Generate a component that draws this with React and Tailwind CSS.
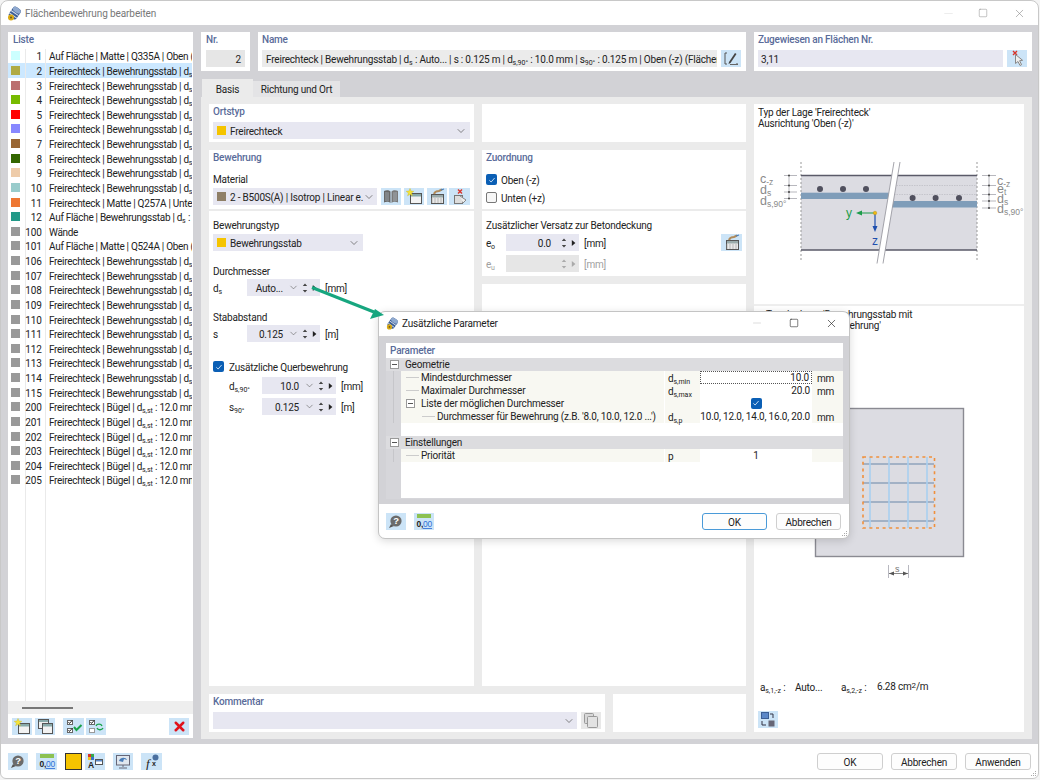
import React from "react";
import { ChevronDown, Square, X, Minus } from "lucide-react";

const Sub = ({ children }) => <span className="text-[7px] leading-none relative top-[2px] tracking-normal">{children}</span>;

const Logo = ({ c = "w-[15px] h-[15px]" }) => (
  <svg viewBox="0 0 15 15" className={c}>
    <g transform="rotate(35 7.5 7.5)">
      <rect x="3" y="1" width="9" height="12" rx="3" fill="#3d5f95" />
      <ellipse cx="7.5" cy="3.5" rx="4.5" ry="2.5" fill="#8fa9cf" />
      <path d="M3 7h9M3 10h9" stroke="#d7e0ee" strokeWidth="1" />
    </g>
    <circle cx="4" cy="11.5" r="3" fill="#d9a915" />
    <circle cx="4" cy="11.5" r="1" fill="#6b5a1c" />
  </svg>
);

const Btn = ({ children, c = "w-[20px]", gray }) => (
  <div className={`${c} h-[17px] shrink-0 flex items-center justify-center ${gray ? "bg-[#e8e8e8]" : "bg-[#cce4f7]"}`}>{children}</div>
);

const Ic = ({ children }) => <svg viewBox="0 0 20 17" className="w-[20px] h-[17px]">{children}</svg>;

const HelpI = () => (
  <Ic>
    <path d="M5 11l-2 4 5-2z" fill="#555" />
    <circle cx="10" cy="8" r="5.6" fill="#6b6b6b" />
    <text x="10" y="11.3" fontSize="9.5" fontWeight="700" textAnchor="middle" fill="#fff" fontFamily="Liberation Sans">?</text>
  </Ic>
);
const UnitsI = () => (
  <Ic>
    <rect x="3" y="1" width="14" height="4" fill="#8cc152" />
    <text x="2.5" y="14" fontSize="8.5" fontWeight="700" fill="#222" fontFamily="Liberation Sans">0,</text>
    <text x="9" y="14" fontSize="8.5" fill="#2f6fd6" fontFamily="Liberation Sans" textDecoration="underline">00</text>
  </Ic>
);
const NewI = () => (
  <Ic>
    <rect x="6.5" y="5.5" width="11" height="10" fill="#f2f2f2" stroke="#555" />
    <rect x="7" y="6" width="10" height="2.5" fill="#8aa" />
    <path d="M6 0.5l1 2.6 2.8.2-2.2 1.8.8 2.7L6 6.3 3.6 7.8l.8-2.7-2.2-1.8 2.8-.2z" fill="#f5e33a" stroke="#c9b81c" strokeWidth=".4" />
  </Ic>
);
const CopyI = () => (
  <Ic>
    <rect x="3.5" y="1.5" width="10" height="9" fill="#eee" stroke="#555" />
    <rect x="7.5" y="5.5" width="10" height="10" fill="#f2f2f2" stroke="#555" />
    <rect x="8" y="6" width="9" height="2.5" fill="#8aa" />
    <rect x="4" y="2" width="9" height="2" fill="#8aa" />
  </Ic>
);
const ChkI = () => (
  <Ic>
    <rect x="3.5" y="2.5" width="5" height="4" fill="#fff" stroke="#666" />
    <rect x="3.5" y="10.5" width="5" height="4" fill="#fff" stroke="#666" />
    <path d="M4.5 4l1 1.5 3-3.5M4.5 12l1 1.5 3-3.5" stroke="#333" fill="none" />
    <path d="M10 9l2.5 3 5-5" stroke="#19a34a" strokeWidth="2" fill="none" />
  </Ic>
);
const SwapI = () => (
  <Ic>
    <rect x="3.5" y="2.5" width="5" height="4" fill="#fff" stroke="#666" />
    <rect x="3.5" y="10.5" width="5" height="4" fill="#fff" stroke="#999" />
    <path d="M4.5 4l1 1.5 3-3.5" stroke="#333" fill="none" />
    <path d="M10 8c1-2.5 5-2.5 6 0M17 10c-1 2-5 2.5-6 0" stroke="#19a34a" strokeWidth="1.4" fill="none" />
  </Ic>
);
const BookI = () => (
  <Ic>
    <path d="M3 3c2-1 5-1 6.5.5V15C8 13.5 5 13.5 3 14.5z" fill="#666" />
    <path d="M17 3c-2-1-5-1-6.5.5V15c1.5-1.5 4.5-1.5 6.5-.5z" fill="#7a7a7a" />
    <path d="M5 4v9M7 4.2v8.8M13 4.2V13M15 4v9" stroke="#c5d0dc" strokeWidth=".6" />
  </Ic>
);
const BoxEditI = () => (
  <Ic>
    <rect x="4.5" y="6.5" width="12" height="9" fill="#e8e8e8" stroke="#555" />
    <rect x="5" y="7" width="11" height="2.5" fill="#9aa" />
    <path d="M5 10v5M8 10v5M11 10v5M14 10v5" stroke="#999" strokeWidth=".6" />
    <path d="M7 6c1-3 3-3 5-3l3-1.5" stroke="#b08a5a" strokeWidth="2" fill="none" />
    <path d="M14 2l3-1" stroke="#4a7db8" strokeWidth="1.2" />
  </Ic>
);
const DelI = () => (
  <Ic>
    <rect x="4.5" y="7.5" width="8" height="8" fill="#ddd" stroke="#777" />
    <path d="M8 1.5l4 4M12 1.5l-4 4" stroke="#d9342b" strokeWidth="1.4" />
    <path d="M10 8l6 4-3 3" stroke="#888" fill="#eee" />
  </Ic>
);
const EditI = () => (
  <Ic>
    <path d="M6 3H4v11h2M15 14h2" stroke="#555" fill="none" />
    <path d="M8 12l6-9 1.5 1-6 9-2 1z" fill="#444" />
    <path d="M9 14.5h8" stroke="#666" />
  </Ic>
);
const PickI = () => (
  <Ic>
    <path d="M6 1l4 4M10 1L6 5" stroke="#d9342b" strokeWidth="1.4" />
    <path d="M8.5 4.5l0 9 2.5-2 2 4 1.6-.8-2-4 3-.4z" fill="#eee" stroke="#888" />
  </Ic>
);
const ColorI = () => (
  <Ic>
    <rect x="3" y="1" width="3" height="3" fill="#d9342b" />
    <rect x="6" y="1" width="3" height="3" fill="#38a84a" />
    <rect x="3" y="4" width="3" height="3" fill="#f2c21c" />
    <rect x="6" y="4" width="3" height="3" fill="#3a6fd0" />
    <text x="3" y="15" fontSize="8.5" fontWeight="700" fill="#222" fontFamily="Liberation Sans">A</text>
    <rect x="10.5" y="6.5" width="7" height="5" fill="#fff" stroke="#555" />
    <rect x="11" y="7" width="6" height="1.5" fill="#5a88c8" />
  </Ic>
);
const MonI = () => (
  <Ic>
    <rect x="3.5" y="2.5" width="13" height="9.5" fill="#dfe6ee" stroke="#667" />
    <path d="M6 8c1-4 7-4 8-1l-3-1-1 3z" fill="#4a7db8" />
    <path d="M10 12v2M6 15h8" stroke="#667" />
  </Ic>
);
const FnI = () => (
  <Ic>
    <text x="4" y="15" fontSize="13" fontStyle="italic" fontFamily="Liberation Serif" fill="#222">f</text>
    <text x="10" y="13" fontSize="7" fontWeight="700" fontFamily="Liberation Sans" fill="#222">x</text>
    <circle cx="13.5" cy="4.5" r="3" fill="#4a6f9f" />
  </Ic>
);
const ViewI = () => (
  <Ic>
    <rect x="3.5" y="1.5" width="7" height="6" fill="#5a88c8" stroke="#3a5f95" />
    <rect x="10.5" y="9.5" width="6" height="6" fill="#667" />
    <path d="M12 3h3v4M8 14H4v-4" stroke="#334" fill="none" />
  </Ic>
);

const Updown = ({ dim }) => (
  <svg viewBox="0 0 6 12" className="w-[6px] h-[12px] shrink-0">
    <path d="M3 1.5L5.2 4H.8z M3 10.5L.8 8h4.4z" fill={dim ? "#aaa" : "#444"} />
  </svg>
);
const RightTri = ({ dim }) => (
  <svg viewBox="0 0 5 8" className="w-[5px] h-[8px] shrink-0">
    <path d="M.8 1l3.6 3-3.6 3z" fill={dim ? "#aaa" : "#222"} />
  </svg>
);

const Tx = ({ children, c = "" }) => <span className={`mt-[2px] ${c}`}>{children}</span>;

const Spin = ({ v, w = "w-[73px]", noChev, dim }) => (
  <div className={`${w} h-[17px] shrink-0 flex items-center pr-[3px] ${dim ? "bg-[#e6e6e6]" : "bg-[#e7e7f1]"}`}>
    <Tx c="flex-1 text-right">{v}</Tx>
    {noChev ? <span className="w-[7px]" /> : <ChevronDown size={11} strokeWidth={1.4} className="text-[#666] ml-[5px]" />}
    <span className="ml-[3px]"><Updown dim={dim} /></span>
    <span className="ml-[4px]"><RightTri dim={dim} /></span>
  </div>
);

const Combo = ({ sw, text, w, chev = "pr-[2px]" }) => (
  <div className={`${w} h-[17px] shrink-0 flex items-center bg-[#e7e7f1] pl-[4px] ${chev} overflow-hidden`}>
    {sw && <span className="w-[9px] h-[9px] shrink-0 mr-[4px]" style={{ background: sw }} />}
    <Tx c="flex-1 whitespace-nowrap overflow-hidden">{text}</Tx>
    <ChevronDown size={12} strokeWidth={1.4} className="text-[#555] shrink-0" />
  </div>
);

const Head = ({ children }) => <div className="h-[14px] leading-[16px] text-[#5a6c9a] font-medium">{children}</div>;
const Lab = ({ children, c = "" }) => <div className={`h-[14px] leading-[16px] ${c}`}>{children}</div>;

const Check = ({ on }) =>
  on ? (
    <span className="w-[11px] h-[11px] rounded-[2px] bg-[#0b5fb5] shrink-0 flex items-center justify-center">
      <svg viewBox="0 0 9 9" className="w-[8px] h-[8px]"><path d="M1.5 4.8l2 2 4-4.6" stroke="#d8e8f8" strokeWidth="1" fill="none" /></svg>
    </span>
  ) : (
    <span className="w-[11px] h-[11px] rounded-[2px] border border-[#777] bg-[#f6f6f6] shrink-0" />
  );

const GREY = "#999999";
const bew = <>Freirechteck | Bewehrungsstab | d<Sub>s</Sub> : Auto...</>;
const bug = <>Freirechteck | Bügel | d<Sub>s,st</Sub> : 12.0 mm</>;
const rows = [
  ["1", "#ccffff", <>Auf Fläche | Matte | Q335A | Oben (-z)</>],
  ["2", "#b0aa44", bew],
  ["3", "#bb7070", bew],
  ["4", "#77bb00", bew],
  ["5", "#ff0000", bew],
  ["6", "#8888ff", bew],
  ["7", "#996633", bew],
  ["8", "#336600", bew],
  ["9", "#eeccaa", bew],
  ["10", "#99cccc", bew],
  ["11", "#ee7733", <>Freirechteck | Matte | Q257A | Unten (+z)</>],
  ["12", "#229988", <>Auf Fläche | Bewehrungsstab | d<Sub>s</Sub> : 10.0 mm</>],
  ["100", GREY, <>Wände</>],
  ["101", GREY, <>Auf Fläche | Matte | Q524A | Oben (-z)</>],
  ...["106", "107", "108", "109", "110", "111", "112", "113", "114", "115"].map((n) => [n, GREY, bew]),
  ...["200", "201", "202", "203", "204", "205"].map((n) => [n, GREY, bug]),
];

const ListPanel = () => (
  <div className="w-[185px] shrink-0 bg-white flex flex-col">
    <div className="h-[16.5px] pl-[5px] leading-[16px] text-[#5a6c9a] font-medium shrink-0">Liste</div>
    <div className="flex-1 flex flex-col min-h-0 overflow-hidden">
      {rows.map(([n, col, t], i) => (
        <div key={n} className={`h-[14.63px] shrink-0 flex items-center whitespace-nowrap overflow-hidden mr-[1px] tracking-[-0.3px] ${i === 1 ? "bg-[#cce8ff]" : ""}`}>
          <span className="w-[18px] h-full shrink-0 border-r border-[#eaeaea] flex items-center pl-[3px]">
            <span className="w-[9px] h-[9px] block" style={{ background: col }} />
          </span>
          <span className="w-[20px] h-full shrink-0 border-r border-[#eaeaea] flex items-center justify-end pr-[3px] pt-[2px] tracking-normal">{n}</span>
          <Tx c="pl-[3px]">{t}</Tx>
        </div>
      ))}
      <div className="flex-1 flex">
        <span className="w-[18px] border-r border-[#eaeaea]" />
        <span className="w-[20px] border-r border-[#eaeaea]" />
      </div>
    </div>
    <div className="h-[13px] bg-[#eeeeee] shrink-0 flex items-center pl-[14px]">
      <span className="w-[51px] h-[2px] bg-[#777]" />
    </div>
    <div className="h-[24px] shrink-0 flex items-center pl-[4px] pr-[4px]">
      <Btn><NewI /></Btn>
      <span className="ml-[3px]"><Btn><CopyI /></Btn></span>
      <span className="ml-[8px]"><Btn c="w-[21px]"><ChkI /></Btn></span>
      <span className="ml-[2px]"><Btn><SwapI /></Btn></span>
      <span className="ml-auto">
        <Btn><X size={15} strokeWidth={4} className="text-[#e0121c]" /></Btn>
      </span>
    </div>
  </div>
);

const TopRow = () => (
  <div className="h-[39px] flex gap-[8px] shrink-0">
    <div className="w-[49px] bg-white px-[5px]">
      <div className="h-[15px] leading-[16px] text-[#5a6c9a] font-medium">Nr.</div>
      <div className="mt-[3px] h-[17px] bg-[#e6e6e6] text-right pr-[4px] leading-[19px]">2</div>
    </div>
    <div className="w-[488px] bg-white px-[4px]">
      <div className="h-[15px] leading-[16px] text-[#5a6c9a] font-medium">Name</div>
      <div className="mt-[3px] flex gap-[4px]">
        <div className="w-[455px] h-[17px] bg-[#ebebeb] pl-[4px] leading-[19px] whitespace-nowrap overflow-hidden">
          Freirechteck | Bewehrungsstab | d<Sub>s</Sub> : Auto... | s : 0.125 m | d<Sub>s,90°</Sub> : 10.0 mm | s<Sub>90°</Sub> : 0.125 m | Oben (-z) (Flächen : 3,11)
        </div>
        <Btn><EditI /></Btn>
      </div>
    </div>
    <div className="w-[278px] bg-white px-[4px]">
      <div className="h-[15px] leading-[16px] text-[#5a6c9a] font-medium">Zugewiesen an Flächen Nr.</div>
      <div className="mt-[3px] flex gap-[4px]">
        <div className="w-[245px] h-[17px] bg-[#e7e7f1] pl-[3px] leading-[19px]">3,11</div>
        <Btn><PickI /></Btn>
      </div>
    </div>
  </div>
);

const Tabs = () => (
  <div className="h-[18px] mt-[8px] shrink-0 flex items-end pl-[1px]">
    <div className="w-[51px] h-[18px] bg-[#ebebeb] text-center leading-[21px]">Basis</div>
    <div className="w-[87px] h-[16.5px] bg-[#e4e4e6] text-center leading-[18px] whitespace-nowrap">Richtung und Ort</div>
  </div>
);

const ColLeft = () => (
  <div className="w-[265px] flex flex-col">
    <div className="h-[38px] bg-white px-[4px] shrink-0">
      <Head>Ortstyp</Head>
      <div className="mt-[4px]"><Combo sw="#f5c400" text="Freirechteck" w="w-[257px]" chev="pr-[3px]" /></div>
    </div>
    <div className="h-[59px] mt-[8px] bg-white px-[4px] shrink-0">
      <Head>Bewehrung</Head>
      <Lab c="mt-[8px]">Material</Lab>
      <div className="mt-[2px] flex items-center">
        <Combo sw="#8f7f66" text="2 - B500S(A) | Isotrop | Linear e..." w="w-[164px]" />
        <span className="ml-[4px]"><Btn><BookI /></Btn></span>
        <span className="ml-[3px]"><Btn><NewI /></Btn></span>
        <span className="ml-[3px]"><Btn><BoxEditI /></Btn></span>
        <span className="ml-[2px]"><Btn c="w-[21px]"><DelI /></Btn></span>
      </div>
    </div>
    <div className="flex-1 mt-[2px] bg-white px-[4px] pt-[7px]">
      <Lab>Bewehrungstyp</Lab>
      <div className="mt-[2px]"><Combo sw="#f5c400" text="Bewehrungsstab" w="w-[150px]" chev="pr-[3px]" /></div>
      <Lab c="mt-[13px]">Durchmesser</Lab>
      <div className="mt-[1px] flex items-center">
        <Tx c="w-[34px]">d<Sub>s</Sub></Tx>
        <Spin v="Auto..." />
        <Tx c="ml-[5px]">[mm]</Tx>
      </div>
      <Lab c="mt-[14px]">Stababstand</Lab>
      <div className="mt-[1px] flex items-center">
        <Tx c="w-[34px]">s</Tx>
        <Spin v="0.125" />
        <Tx c="ml-[5px]">[m]</Tx>
      </div>
      <div className="mt-[18px] h-[13px] flex items-center gap-[5px]">
        <Check on />
        <Tx>Zusätzliche Querbewehrung</Tx>
      </div>
      <div className="mt-[4px] pl-[16px] flex items-center">
        <Tx c="w-[33px]">d<Sub>s,90°</Sub></Tx>
        <Spin v="10.0" w="w-[74px]" />
        <Tx c="ml-[5px]">[mm]</Tx>
      </div>
      <div className="mt-[4px] pl-[16px] flex items-center">
        <Tx c="w-[33px]">s<Sub>90°</Sub></Tx>
        <Spin v="0.125" w="w-[74px]" />
        <Tx c="ml-[5px]">[m]</Tx>
      </div>
    </div>
  </div>
);

const ColMid = () => (
  <div className="w-[264px] flex flex-col">
    <div className="h-[38px] bg-white shrink-0" />
    <div className="h-[59px] mt-[8px] bg-white px-[4px] shrink-0">
      <Head>Zuordnung</Head>
      <div className="mt-[9px] h-[13px] flex items-center gap-[4px]"><Check on /><Tx>Oben (-z)</Tx></div>
      <div className="mt-[5px] h-[13px] flex items-center gap-[4px]"><Check /><Tx>Unten (+z)</Tx></div>
    </div>
    <div className="h-[65px] mt-[2px] bg-white px-[4px] pt-[7px] shrink-0">
      <Lab>Zusätzlicher Versatz zur Betondeckung</Lab>
      <div className="mt-[2px] flex items-center">
        <Tx c="w-[20px]">e<Sub>o</Sub></Tx>
        <Spin v="0.0" noChev />
        <Tx c="ml-[5px]">[mm]</Tx>
        <span className="ml-auto"><Btn c="w-[21px]"><BoxEditI /></Btn></span>
      </div>
      <div className="mt-[4px] flex items-center text-[#a0a0a0]">
        <Tx c="w-[20px]">e<Sub>u</Sub></Tx>
        <Spin v="" noChev dim />
        <Tx c="ml-[5px]">[mm]</Tx>
      </div>
    </div>
    <div className="flex-1 mt-[8px] bg-white" />
  </div>
);

const G = { fontFamily: "Liberation Sans", letterSpacing: 0 };
const Diagram1 = () => (
  <svg viewBox="754 150 270 120" className="w-[270px] h-[120px] mt-[21px] block">
    <rect x="801" y="176" width="176" height="74" fill="#dcdce2" />
    <path d="M801 162v100M977 162v100" stroke="#999" strokeDasharray="2 2" />
    <path d="M801 175.5h176M801 250h176" stroke="#5a5a68" strokeWidth="1.4" />
    <path d="M894 185.5h83M894 194.5h83" stroke="#b5b5bd" strokeWidth=".6" strokeDasharray="1.5 1" />
    <rect x="801" y="192.7" width="90" height="6.3" fill="#7f9db9" />
    <rect x="890" y="201" width="87" height="6.5" fill="#7f9db9" />
    {[820, 843, 866].map((x) => <circle key={x} cx={x} cy="189" r="3" fill="#50505e" />)}
    {[912.6, 935.6, 959].map((x) => <circle key={x} cx={x} cy="198" r="3" fill="#50505e" />)}
    <path d="M894 162L877 263.5H883L900 162z" fill="#fff" />
    <path d="M894 162L877 263.5M900 162L883 263.5" stroke="#9a9aa2" strokeWidth=".9" />
    <path d="M789 175v24M784 175.5h13M784 185.5h13M784 192h13M784 198.5h13" stroke="#9a9aa2" strokeWidth=".7" />
    <path d="M989 175v33M982 175.5h14M982 185.5h14M982 194.5h14M982 201h14M982 208h14" stroke="#9a9aa2" strokeWidth=".7" />
    {[175.5, 185.5, 192, 198.5].map((y) => <circle key={y} cx="789" cy={y} r="1" fill="#444" />)}
    {[175.5, 185.5, 194.5, 201, 208].map((y) => <circle key={y} cx="989" cy={y} r="1" fill="#444" />)}
    <g fill="#8a8a8a" style={G}>
      <text x="760" y="183" fontSize="12.5">c<tspan fontSize="8.5" dy="2">-z</tspan></text>
      <text x="760" y="194" fontSize="12.5">d<tspan fontSize="8.5" dy="2">s</tspan></text>
      <text x="760" y="205" fontSize="12.5">d<tspan fontSize="8.5" dy="2">s,90°</tspan></text>
      <text x="997" y="184.5" fontSize="12.5">c<tspan fontSize="8.5" dy="2">-z</tspan></text>
      <text x="997" y="192.5" fontSize="12.5">e<tspan fontSize="8.5" dy="2">t</tspan></text>
      <text x="997" y="202.5" fontSize="12.5">d<tspan fontSize="8.5" dy="2">s</tspan></text>
      <text x="997" y="212.5" fontSize="12.5">d<tspan fontSize="8.5" dy="2">s,90°</tspan></text>
    </g>
    <path d="M875 213h-15" stroke="#1c9c4a" strokeWidth="1.2" />
    <path d="M856 213l6-2.5v5z" fill="#1c9c4a" />
    <path d="M875 213v15" stroke="#1e4fae" strokeWidth="1.2" />
    <path d="M875 232l-2.5-6h5z" fill="#1e4fae" />
    <circle cx="875" cy="213" r="1.8" fill="#f2b90f" stroke="#b08a10" strokeWidth=".4" />
    <text x="846" y="217" fontSize="12" fill="#1c9c4a" style={G}>y</text>
    <text x="872" y="245" fontSize="12" fill="#1e4fae" style={G}>z</text>
  </svg>
);

const Diagram2 = () => (
  <svg viewBox="754 400 270 185" className="w-[270px] h-[185px] mt-[69px] block shrink-0">
    <rect x="815.5" y="408.5" width="148" height="148" fill="#dcdce2" stroke="#8a8a92" strokeWidth="1.4" />
    {[464, 483, 502, 521].map((y) => <path key={y} d={`M863 ${y}h71`} stroke="#8fa3bb" strokeWidth="1.6" />)}
    {[870, 889, 908, 927].map((x) => <path key={x} d={`M${x} 457v71`} stroke="#a9d0f0" strokeWidth="1.6" />)}
    <rect x="863" y="457" width="71.5" height="71" fill="none" stroke="#f0903c" strokeWidth="1.6" strokeDasharray="3 3.6" />
    <path d="M888.5 565v13M908.5 565v13" stroke="#b8b8c0" />
    <path d="M889 573.5h19" stroke="#555" strokeWidth=".7" />
    <path d="M889 573.5l5-2v4zM908 573.5l-5-2v4z" fill="#555" />
    <text x="895" y="572" fontSize="9" fill="#777" style={G}>s</text>
  </svg>
);

const ColRight = () => (
  <div className="w-[270px] bg-white flex flex-col">
    <div className="h-[200px] shrink-0 pt-[3px] pl-[4px] leading-[11px]">
      <div>Typ der Lage 'Freirechteck'</div>
      <div>Ausrichtung 'Oben (-z)'</div>
      <div className="-ml-[4px]"><Diagram1 /></div>
    </div>
    <div className="h-[2px] bg-[#eeeeee] shrink-0" />
    <div className="flex-1 flex flex-col pt-[3px] leading-[11px] min-h-0">
      <div className="pl-[12px] whitespace-nowrap">Typ der Lage 'Bewehrungsstab mit</div>
      <div className="pl-[4px] whitespace-nowrap">zusätzlicher Querbewehrung'</div>
      <Diagram2 />
      <div className="mt-[96px] h-[12px] flex items-center pl-[6px] whitespace-nowrap">
        <span className="w-[35px]">a<Sub>s,1,-z</Sub> :</span>
        <span className="w-[46px]">Auto...</span>
        <span className="w-[36px]">a<Sub>s,2,-z</Sub> :</span>
        <span>6.28 cm<span className="text-[8px] relative top-[-2px]">2</span>/m</span>
      </div>
      <div className="mt-auto pl-[4px] pb-[4px]"><Btn><ViewI /></Btn></div>
    </div>
  </div>
);

const Kommentar = () => (
  <div className="h-[38px] mt-[8px] shrink-0 flex gap-[8px]">
    <div className="w-[396px] bg-white px-[4px]">
      <Head>Kommentar</Head>
      <div className="mt-[4px] flex items-center">
        <Combo w="w-[364px]" text="" chev="pr-[2px]" />
        <span className="ml-[4px]">
          <Btn gray>
            <Ic>
              <rect x="3.5" y="1.5" width="9" height="10" rx="1" fill="#d8d8d8" stroke="#999" />
              <rect x="6.5" y="4.5" width="10" height="11" rx="1" fill="#e2e2e2" stroke="#999" />
            </Ic>
          </Btn>
        </span>
      </div>
    </div>
    <div className="flex-1 bg-white" />
  </div>
);

const FootBtn = ({ children, prim, w = "w-[66px]" }) => (
  <div className={`${w} h-[17px] rounded-[3px] border bg-[#fdfdfd] text-center leading-[17px] ${prim ? "border-[#4a9ad8]" : "border-[#cfcfcf]"}`}>{children}</div>
);

const Grip = () => (
  <svg viewBox="0 0 7 7" className="w-[7px] h-[7px]">
    <path d="M5.5 1v1M3.5 3v1M5.5 3v1M1.5 5v1M3.5 5v1M5.5 5v1" stroke="#aaa" />
  </svg>
);

const Cell = ({ ind = 5, name, sym, val, unit, focus, chk, center, exp }) => (
  <div className="h-[13px] flex items-center leading-[15px] whitespace-nowrap">
    <span className="w-[15px] h-full bg-[#d6d6da] shrink-0 relative">
      <span className="absolute left-[7px] top-0 bottom-0 border-l border-[#c6c6ca]" />
    </span>
    <span className="w-[263px] h-full bg-[#f8f8f2] shrink-0 flex items-center" style={{ paddingLeft: ind }}>
      {exp ? (
        <span className="w-[9px] h-[9px] border border-[#999] bg-white mr-[6px] shrink-0 flex items-center justify-center">
          <span className="w-[5px] h-[1px] bg-[#555]" />
        </span>
      ) : (
        <span className="w-[13px] border-t border-[#ccc] mr-[2px] shrink-0" />
      )}
      <span>{name}</span>
    </span>
    <span className="w-[36px] h-full bg-[#f8f8f2] border-l border-[#fff] shrink-0 pl-[3px]">{sym}</span>
    <span className={`w-[112px] h-full shrink-0 bg-white flex items-center ${center ? "justify-center" : "justify-end pr-[2px]"} ${focus ? "border border-dotted border-[#555]" : ""}`}>
      {chk ? <Check on /> : <span>{val}</span>}
    </span>
    <span className="flex-1 h-full bg-[#f8f8f2] pl-[5px]">{unit}</span>
  </div>
);

const GroupRow = ({ name }) => (
  <div className="h-[13px] bg-[#dcdcdf] flex items-center leading-[15px] pl-[4px]">
    <span className="w-[9px] h-[9px] border border-[#999] bg-white flex items-center justify-center mr-[6px] shrink-0">
      <span className="w-[5px] h-[1px] bg-[#555]" />
    </span>
    <span>{name}</span>
  </div>
);

const Blank = ({ h }) => (
  <div className={`${h} flex`}>
    <span className="w-[15px] bg-[#d6d6da]" />
    <span className="flex-1 bg-white" />
  </div>
);

const Dialog = () => (
  <div className="absolute left-[378px] top-[311px] w-[472px] h-[228px] rounded-[7px] border border-[#c4c4c4] bg-white flex flex-col overflow-hidden shadow-[0_2px_8px_rgba(0,0,0,0.15)]">
    <div className="h-[24px] shrink-0 flex items-center pl-[7px] pb-[2px] text-[#222]">
      <Logo c="w-[13px] h-[13px]" />
      <span className="ml-[3px]">Zusätzliche Parameter</span>
      <Minus size={12} strokeWidth={1} className="absolute left-[372px] text-[#bbb]" />
      <Square size={10} strokeWidth={1.4} className="absolute left-[410px] text-[#222]" />
      <X size={13} strokeWidth={1.2} className="absolute left-[446px] text-[#222]" />
    </div>
    <div className="h-[168px] shrink-0 bg-[#d2d2d6] pl-[7px] pr-[6px] pt-[7px] pb-[5px]">
      <div className="h-[156px] bg-white flex flex-col">
        <div className="h-[14.5px] leading-[16px] pl-[4px] text-[#5a6c9a] font-medium shrink-0">Parameter</div>
        <GroupRow name="Geometrie" />
        <Cell name="Mindestdurchmesser" sym={<>d<Sub>s,min</Sub></>} val="10.0" unit="mm" focus />
        <Cell name="Maximaler Durchmesser" sym={<>d<Sub>s,max</Sub></>} val="20.0" unit="mm" />
        <Cell exp name="Liste der möglichen Durchmesser" chk center />
        <Cell ind={21} name="Durchmesser für Bewehrung (z.B. '8.0, 10.0, 12.0 ...')" sym={<>d<Sub>s,p</Sub></>} val="10.0, 12.0, 14.0, 16.0, 20.0" unit="mm" />
        <Blank h="h-[13px]" />
        <GroupRow name="Einstellungen" />
        <Cell name="Priorität" sym="p" val="1" center />
        <div className="flex-1 flex">
          <span className="w-[15px] bg-[#d6d6da]" />
          <span className="flex-1" />
        </div>
        <div className="h-[1px] bg-[#d6d6da] shrink-0" />
      </div>
    </div>
    <div className="flex-1 flex items-center pl-[7px] pr-[8px] relative">
      <Btn><HelpI /></Btn>
      <span className="ml-[8px]"><Btn><UnitsI /></Btn></span>
      <span className="ml-auto"><FootBtn prim w="w-[65px]">OK</FootBtn></span>
      <span className="ml-[9px]"><FootBtn w="w-[65px]">Abbrechen</FootBtn></span>
      <span className="absolute right-[1px] bottom-[1px]"><Grip /></span>
    </div>
  </div>
);

export default function App() {
  return (
    <div className="relative w-[1040px] h-[780px] bg-[#f4f4f4] overflow-hidden text-[#222] text-[10px] tracking-[-0.2px] font-['Roboto','Open_Sans',sans-serif]">
      <div className="w-[1039px] h-[779px] rounded-t-[8px] rounded-b-[6px] border border-[#c8c8c8] bg-white flex flex-col overflow-hidden">
        <div className="h-[24px] shrink-0 flex items-center pl-[6px] pr-[12px]">
          <Logo />
          <span className="ml-[3px] text-[#777] tracking-[-0.1px]">Flächenbewehrung bearbeiten</span>
          <Minus size={13} strokeWidth={1} className="ml-auto text-[#ddd]" />
          <Square size={10} strokeWidth={1.2} className="ml-[23px] text-[#888]" />
          <X size={13} strokeWidth={1.1} className="ml-[25px] text-[#888]" />
        </div>
        <div className="h-[719px] shrink-0 bg-[#d2d2d6] flex gap-[8px] pl-[7px] pr-[6px] pt-[7px] pb-[5px]">
          <div className="flex pb-[1px]"><ListPanel /></div>
          <div className="flex-1 flex flex-col min-w-0">
            <TopRow />
            <Tabs />
            <div className="flex-1 bg-[#ebebeb] flex gap-[8px] p-[8px] pt-[7px] pb-[7px] min-h-0">
              <div className="w-[537px] flex flex-col">
                <div className="flex-1 flex gap-[8px] min-h-0">
                  <ColLeft />
                  <ColMid />
                </div>
                <Kommentar />
              </div>
              <ColRight />
            </div>
          </div>
        </div>
        <div className="flex-1 flex items-center pl-[7px] pr-[7px] relative">
          <Btn><HelpI /></Btn>
          <span className="ml-[8px]"><Btn c="w-[21px]"><UnitsI /></Btn></span>
          <span className="ml-[8px] w-[17px] h-[17px] bg-[#f5c400] border border-[#333]" />
          <span className="ml-[3px]"><Btn><ColorI /></Btn></span>
          <span className="ml-[8px]"><Btn><MonI /></Btn></span>
          <span className="ml-[8px]"><Btn c="w-[21px]"><FnI /></Btn></span>
          <span className="ml-auto"><FootBtn>OK</FootBtn></span>
          <span className="ml-[8px]"><FootBtn>Abbrechen</FootBtn></span>
          <span className="ml-[8px]"><FootBtn>Anwenden</FootBtn></span>
          <span className="absolute right-[1px] bottom-[1px]"><Grip /></span>
        </div>
      </div>
      <Dialog />
      <svg viewBox="300 280 100 50" className="absolute left-[300px] top-[280px] w-[100px] h-[50px]">
        <path d="M312 287.5L374 312" stroke="#17a67f" strokeWidth="3" />
        <path d="M375 309L370 319L384 315z" fill="#17a67f" />
      </svg>
    </div>
  );
}
